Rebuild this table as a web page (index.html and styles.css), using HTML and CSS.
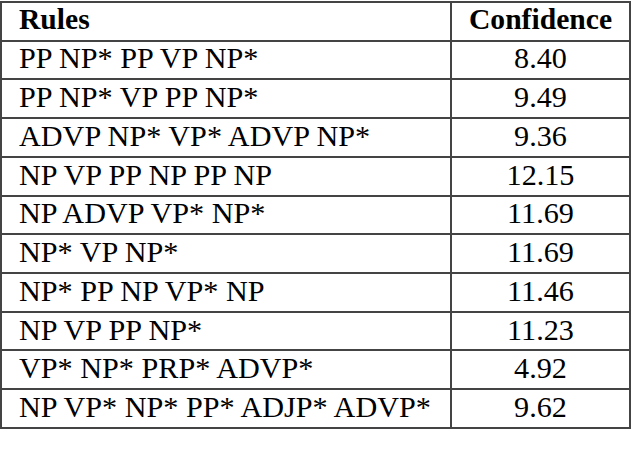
FILE: index.html
```
<!DOCTYPE html>
<html>
<head>
<meta charset="utf-8">
<link rel="stylesheet" href="styles.css">
</head>
<body>
<div class="rules" role="table">
  <div class="cell head rule">Rules</div><div class="cell head conf">Confidence</div>
  <div class="cell rule">PP NP* PP VP NP*</div><div class="cell conf">8.40</div>
  <div class="cell rule">PP NP* VP PP NP*</div><div class="cell conf">9.49</div>
  <div class="cell rule">ADVP NP* VP* ADVP NP*</div><div class="cell conf">9.36</div>
  <div class="cell rule">NP VP PP NP PP NP</div><div class="cell conf">12.15</div>
  <div class="cell rule">NP ADVP VP* NP*</div><div class="cell conf">11.69</div>
  <div class="cell rule">NP* VP NP*</div><div class="cell conf">11.69</div>
  <div class="cell rule">NP* PP NP VP* NP</div><div class="cell conf">11.46</div>
  <div class="cell rule">NP VP PP NP*</div><div class="cell conf">11.23</div>
  <div class="cell rule">VP* NP* PRP* ADVP*</div><div class="cell conf">4.92</div>
  <div class="cell rule">NP VP* NP* PP* ADJP* ADVP*</div><div class="cell conf">9.62</div>
</div>
</body>
</html>
```
FILE: styles.css
```
html, body {
  margin: 0;
  padding: 0;
  background: #ffffff;
}
body {
  padding-top: 1px;
  color: #000;
  font-family: "Liberation Serif", "Times New Roman", serif;
}
.rules {
  display: grid;
  grid-template-columns: 450px 179px;
  grid-auto-rows: 38.73px;
  width: 631px;
  box-sizing: border-box;
  border-top: 2px solid #444;
  border-left: 2px solid #444;
  font-size: 30.2px;
  line-height: 1;
}
.cell {
  display: flex;
  align-items: center;
  box-sizing: border-box;
  border-right: 2px solid #444;
  border-bottom: 2px solid #444;
  padding-bottom: 3px;
  white-space: nowrap;
}
.head {
  font-weight: bold;
  font-size: 29.6px;
}
.rule {
  justify-content: flex-start;
  padding-left: 17px;
}
.conf {
  justify-content: center;
}
```
